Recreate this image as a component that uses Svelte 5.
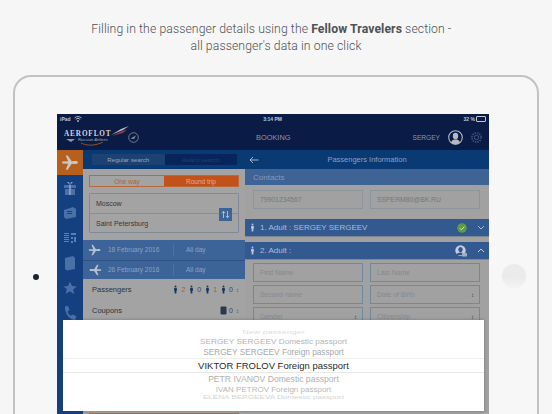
<script>
	const railIcons = ["plane", "gift", "ticket", "qr", "doc", "star", "phone"];
	const dates = [
		{ date: "18 February 2016", flip: false },
		{ date: "26 February 2016", flip: true }
	];
	const counts = [
		{ n: 2, hot: true },
		{ n: 0, hot: false },
		{ n: 1, hot: true },
		{ n: 0, hot: false }
	];
	const wheel = [
		{ text: "New passenger", cls: "r-3" },
		{ text: "SERGEY SERGEEV Domestic passport", cls: "r-2" },
		{ text: "SERGEY SERGEEV Foreign passport", cls: "r-1" },
		{ text: "VIKTOR FROLOV Foreign passport", cls: "r0" },
		{ text: "PETR IVANOV Domestic passport", cls: "r1" },
		{ text: "IVAN PETROV Foreign passport", cls: "r2" },
		{ text: "ELENA BERGEEVA Domestic passport", cls: "r3" }
	];
	const planePath = "M1 7.2 6 7l-2-5h1.6L9 7l3.6-.2c1 0 1.6.5 1.6 1.2s-.6 1.2-1.6 1.2L9 9l-3.4 5H4l2-5-5-.2z";
	const personPath = "M6 .5a1.6 1.6 0 1 1 0 3.2A1.6 1.6 0 0 1 6 .5zM4 4.4h4l.8 5H7.6l-.2 5H4.6l-.2-5H3.2z";
</script>

<div class="page">
	<p class="caption">
		Filling in the passenger details using the <b>Fellow Travelers</b> section -&nbsp;&nbsp;&nbsp;<br />
		all passenger's data in one click
	</p>

	<div class="tablet">
		<div class="camera"></div>
		<div class="home"></div>

		<div class="screen">
			<div class="status">
				<span class="carrier">iPad
					<svg width="8" height="6" viewBox="0 0 8 6"><path d="M.5 2a5 5 0 0 1 7 0M1.8 3.3a3.2 3.2 0 0 1 4.4 0" fill="none" stroke="#b8bfcc" stroke-width=".9" /><circle cx="4" cy="5" r=".9" fill="#b8bfcc" /></svg>
				</span>
				<span>3:14 PM</span>
				<span class="battery">32 % <i></i></span>
			</div>

			<div class="topbar">
				<div class="brand">
					<div class="logo">
						<span class="logo-name">AEROFLOT</span>
						<svg class="wing" width="18" height="11" viewBox="0 0 18 11">
							<path d="M0 9 10 3l8-3-6 4z" fill="#b9bfc9" />
							<path d="M1 10l10-5 5-1.500L12 7z" fill="#8f3b3f" />
						</svg>
						<svg class="swoosh" width="22" height="4" viewBox="0 0 22 4"><path d="M0 1c6 3 14 3 22-1" fill="none" stroke="#a2562b" stroke-width=".9" /></svg>
						<svg class="wing-left" width="9" height="3" viewBox="0 0 9 3"><path d="M0 0h9L5 3z" fill="#8d95a8" /></svg>
						<span class="logo-sub">Russian Airlines</span>
					</div>
					<svg width="11" height="11" viewBox="0 0 11 11"><circle cx="5.500" cy="5.500" r="4.800" fill="none" stroke="#8b93a5" stroke-width=".8" /><path d="M2.500 6.500 8 3.500 6 7z" fill="#8b93a5" /></svg>
				</div>
				<div class="top-main">
					<span class="booking">BOOKING</span>
					<span class="user">SERGEY</span>
					<svg class="avatar" width="15" height="15" viewBox="0 0 15 15">
						<circle cx="7.500" cy="7.500" r="6.800" fill="#0a1a44" stroke="#b4b9c4" stroke-width="1.100" />
						<ellipse cx="7.500" cy="6" rx="2.700" ry="3.200" fill="#b4b9c4" />
						<path d="M3 12.500c.8-2.500 2.400-3 4.500-3s3.700.5 4.500 3a6 6 0 0 1-9 0z" fill="#b4b9c4" />
					</svg>
					<svg class="gear" width="13" height="13" viewBox="0 0 13 13">
						<circle cx="6.500" cy="6.500" r="2.200" fill="none" stroke="#47567a" />
						<circle cx="6.500" cy="6.500" r="4.600" fill="none" stroke="#47567a" stroke-width="1.600" stroke-dasharray="1.400 1" />
					</svg>
				</div>
			</div>

			<div class="content">
				<nav class="rail">
					{#each railIcons as icon, i}
						<div class="rail-item" class:active={i === 0}>
							<svg width={i === 0 ? 19 : 16} height={i === 0 ? 19 : 16} viewBox="0 0 16 16">
								{#if icon === "plane"}
									<path d={planePath} fill="#c8c8c8" />
								{:else if icon === "gift"}
									<path d="M2 5h12v3H2zM3 9h10v6H3z" fill="#4a70a8" /><path d="M7.200 5h1.600v10H7.200zM8 5 5 2h2zM8 5l3-3H9z" fill="#8da6c8" />
								{:else if icon === "ticket"}
									<path d="M2 5l9-3 3 2v8l-10 2-2-2z" fill="#4a70a8" /><path d="M5 6h5v1H5zM5 8h5v1H5z" fill="#18407f" />
								{:else if icon === "qr"}
									<path d="M2 3h5v1H2zM2 5h5v1H2zM2 7h5v1H2zM2 9h5v1H2zM2 11h5v1H2zM9 3h5v2H9zM9 7h2v2H9zM12 7h2v5h-2zM9 11h2v2H9z" fill="#5b7fb4" />
								{:else if icon === "doc"}
									<path d="M3 3l8-2 2 2v11l-8 1.500-2-1.500z" fill="#4a70a8" />
								{:else if icon === "star"}
									<path d="M8 1.500l2 4.500 4.800.4-3.700 3.100 1.200 4.700L8 11.200l-4.300 2.500 1.200-4.700L1.200 6.400 6 6z" fill="#4a70a8" />
								{:else}
									<path d="M3 1.500 6 1l1.500 4-2 1.500c.6 1.800 1.700 3.200 3.300 4.300L11 9.500l3.500 2L13 15C7.500 15 2.500 8 3 1.500z" fill="#4a70a8" />
								{/if}
							</svg>
						</div>
					{/each}
				</nav>

				<section class="search">
					<div class="tabs">
						<span class="tab on">Regular search</span>
						<span class="tab">Award search</span>
					</div>
					<div class="form">
						<div class="trip">
							<span>One way</span>
							<span class="sel">Round trip</span>
						</div>
						<div class="cities">
							<div class="city">Moscow</div>
							<div class="city">Saint Petersburg</div>
							<div class="swap">
								<svg width="9" height="9" viewBox="0 0 9 9"><path d="M2.500 8V1.500M.8 3.200l1.700-2 1.700 2M6.500 1v6.500M4.800 5.800l1.700 2 1.700-2" fill="none" stroke="#b5c4da" stroke-width=".9" /></svg>
							</div>
						</div>
					</div>
					<div class="dates">
						{#each dates as d}
							<div class="date-row">
								<svg class:flip={d.flip} width="14" height="14" viewBox="0 0 16 16"><path d={planePath} fill="#b6c2d6" /></svg>
								<span class="date">{d.date}</span>
								<span class="day">All day</span>
							</div>
						{/each}
					</div>
					<div class="line">
						<span>Passengers</span>
						<div class="counts">
							{#each counts as c}
								<svg width="7" height="11" viewBox="0 0 12 15"><path d={personPath} fill="#17365f" /></svg>
								<span class:hot={c.hot}>{c.n}</span>
							{/each}
							<span class="updown">↕</span>
						</div>
					</div>
					<div class="line">
						<span>Coupons</span>
						<div class="counts">
							<svg width="7" height="9" viewBox="0 0 7 9"><rect x=".5" y=".5" width="6" height="8" rx="1" fill="#2b3950" /></svg>
							<span>0</span>
							<span class="updown">↕</span>
						</div>
					</div>
					<div class="bottom-cta"></div>
				</section>

				<section class="details">
					<div class="subhead">
						<svg width="10" height="8" viewBox="0 0 10 8"><path d="M9.500 4H1M4 1 1 4l3 3" fill="none" stroke="#b5c1d3" stroke-width=".9" /></svg>
						<span>Passengers Information</span>
					</div>
					<div class="contacts">Contacts</div>
					<div class="fields pad-contact">
						<div class="field">79901234567</div>
						<div class="field">SSPERM80@BK.RU</div>
					</div>
					<div class="adult">
						<svg width="7" height="11" viewBox="0 0 12 15"><path d={personPath} fill="#b8c5d8" /></svg>
						<span>1. Adult : SERGEY SERGEEV</span>
						<svg class="adult-state" width="10" height="10" viewBox="0 0 10 10"><circle cx="5" cy="5" r="4.800" fill="#5f9a45" /><path d="M2.800 5.200 4.400 6.800 7.400 3.500" fill="none" stroke="#d5e4cc" stroke-width="1" /></svg>
						<svg class="chev" width="8" height="5" viewBox="0 0 8 5"><path d="M1 1l3 3 3-3" fill="none" stroke="#a9b9d0" /></svg>
					</div>
					<div class="adult second">
						<svg width="7" height="11" viewBox="0 0 12 15"><path d={personPath} fill="#b8c5d8" /></svg>
						<span>2. Adult :</span>
						<svg class="adult-state" width="12" height="12" viewBox="0 0 12 12"><circle cx="5.500" cy="5.500" r="5.200" fill="#c3cddd" /><ellipse cx="5.500" cy="4.600" rx="2.200" ry="2.600" fill="#31568a" /><path d="M1.500 10c.6-2 2-2.600 4-2.600s3.400.6 4 2.600z" fill="#31568a" /><rect x="7" y="8" width="5" height="3.500" rx=".5" fill="#9fb0c8" /></svg>
						<svg class="chev" width="8" height="5" viewBox="0 0 8 5"><path d="M1 4l3-3 3 3" fill="none" stroke="#c3cddd" /></svg>
					</div>
					<div class="fields grid3">
						<div class="field blue">First Name</div>
						<div class="field blue">Last Name</div>
						<div class="field blue">Second name</div>
						<div class="field blue">Date of Birth<em>↕</em></div>
						<div class="field blue">Gender<em>↕</em></div>
						<div class="field blue">Citizenship<em>↕</em></div>
					</div>
				</section>
			</div>

			<div class="picker">
				<div class="wheel">
					{#each wheel as row}
						<div class="row {row.cls}"><span>{row.text}</span></div>
					{/each}
				</div>
			</div>
		</div>
	</div>
</div>

<style>
	:global(body) {
		margin: 0;
		background: #f6f6f6;
	}
	.page {
		width: 552px;
		height: 414px;
		overflow: hidden;
		background: #f6f6f6;
		font-family: "Liberation Sans", sans-serif;
	}
	.caption {
		margin: 0;
		height: 75px;
		box-sizing: border-box;
		padding-top: 20px;
		text-align: center;
		font-family: Roboto, sans-serif;
		font-weight: 300;
		font-size: 13.5px;
		line-height: 17px;
		letter-spacing: 0.1px;
		color: #4e5155;
		transform: scaleX(0.905);
	}
	.caption b {
		font-weight: 700;
	}
	.tablet {
		position: relative;
		box-sizing: border-box;
		width: 526px;
		height: 400px;
		margin-left: 13px;
		padding: 37px 48px 0 42px;
		border: 2px solid #c2c2c2;
		border-radius: 18px;
		background: #f7f7f7;
	}
	.camera {
		position: absolute;
		left: 18px;
		top: 197px;
		width: 6px;
		height: 6px;
		border-radius: 50%;
		background: #1d2433;
	}
	.home {
		position: absolute;
		left: 487px;
		top: 187px;
		width: 24px;
		height: 24px;
		border-radius: 50%;
		background: linear-gradient(#ebebeb 55%, #f3f3f3);
		box-shadow: 0 0 0 1px #f5f5f5;
	}
	.screen {
		position: relative;
		height: 300px;
		background: #0a1b45;
		color: #b8bfcc;
	}
	.status {
		display: flex;
		justify-content: space-between;
		align-items: center;
		height: 10px;
		padding: 0 3px;
		font-size: 5px;
		font-weight: 700;
		color: #c2c7d2;
	}
	.carrier {
		display: flex;
		align-items: center;
		gap: 3px;
	}
	.battery {
		display: flex;
		align-items: center;
		gap: 1px;
	}
	.battery i {
		width: 8px;
		height: 4px;
		border: 1px solid #c2c7d2;
		border-radius: 1px;
	}
	.topbar {
		display: flex;
		height: 26px;
	}
	.brand {
		display: flex;
		align-items: center;
		gap: 2px;
		width: 188px;
		padding-left: 7px;
		box-sizing: border-box;
	}
	.logo {
		position: relative;
		width: 62px;
		height: 20px;
	}
	.logo-name {
		position: absolute;
		left: 0;
		top: 3px;
		font-family: "Liberation Serif", serif;
		font-weight: 700;
		font-size: 7.200px;
		letter-spacing: 0.9px;
		color: #d3d6dd;
	}
	.wing {
		position: absolute;
		left: 47px;
		top: -1px;
	}
	.swoosh {
		position: absolute;
		left: 17px;
		top: 15px;
	}
	.wing-left {
		position: absolute;
		left: 2px;
		top: 12px;
	}
	.logo-sub {
		position: absolute;
		left: 14px;
		top: 10px;
		font-size: 4.200px;
		font-style: italic;
		color: #a3aabb;
	}
	.top-main {
		flex: 1;
		display: flex;
		align-items: center;
		color: #8e97aa;
	}
	.booking {
		margin-left: 11px;
		font-size: 7.400px;
	}
	.user {
		margin-left: auto;
		font-size: 6.600px;
	}
	.avatar {
		margin-left: 8px;
	}
	.gear {
		margin: 0 6px 0 7px;
	}
	.content {
		position: relative;
		display: flex;
		height: 264px;
	}
	.rail {
		width: 26px;
		flex: none;
		background: #15407f;
	}
	.rail-item {
		display: flex;
		align-items: center;
		justify-content: center;
		height: 25px;
	}
	.rail-item.active {
		background: #b5601f;
	}
	.search {
		width: 162px;
		flex: none;
		background: #a3a3a3;
		color: #30343b;
		font-size: 7px;
	}
	.tabs {
		display: flex;
		height: 19px;
		box-sizing: border-box;
		padding: 4px 8px 4px 9px;
		background: #0a3a73;
	}
	.tab {
		flex: 1;
		display: flex;
		align-items: center;
		justify-content: center;
		background: #07255a;
		color: #21406f;
		font-size: 6.200px;
	}
	.tab.on {
		background: #1d4272;
		color: #94a6bf;
	}
	.form {
		padding: 6px 6px 7px;
	}
	.trip {
		display: flex;
		height: 12px;
		box-sizing: border-box;
		border: 1px solid #b86a3c;
		color: #b8622e;
		font-size: 6.500px;
	}
	.trip span {
		flex: 1;
		display: flex;
		align-items: center;
		justify-content: center;
	}
	.trip .sel {
		background: #c2521a;
		color: #eba987;
	}
	.cities {
		position: relative;
		margin-top: 6px;
		box-sizing: border-box;
		height: 40px;
		border: 1px solid #7f8b9c;
		border-radius: 1px;
	}
	.city {
		display: flex;
		align-items: center;
		height: 19px;
		padding-left: 6px;
		color: #33373d;
		font-size: 7px;
	}
	.city + .city {
		border-top: 1px solid #8d8d8d;
	}
	.swap {
		position: absolute;
		right: 6px;
		top: 14px;
		display: flex;
		align-items: center;
		justify-content: center;
		width: 13px;
		height: 13px;
		background: #3c6499;
	}
	.dates {
		background: #3d6499;
	}
	.date-row {
		display: flex;
		align-items: center;
		box-sizing: border-box;
		height: 19.500px;
		padding-left: 5px;
		color: #8ea2bf;
		font-size: 6.500px;
	}
	.date-row + .date-row {
		border-top: 1px solid #2f5285;
	}
	.date-row svg {
		width: 14px;
		flex: none;
	}
	.flip {
		transform: scaleX(-1);
	}
	.date {
		width: 65px;
		margin-left: 6px;
		border-right: 1px solid #50729f;
		line-height: 12px;
	}
	.day {
		margin-left: 12px;
	}
	.line {
		display: flex;
		align-items: center;
		justify-content: space-between;
		height: 21px;
		padding: 0 6px 0 9px;
		color: #2f343b;
		font-size: 7.500px;
	}
	.counts {
		display: flex;
		align-items: center;
		gap: 2px;
		font-size: 7px;
		color: #3a4658;
	}
	.counts span {
		margin-right: 1px;
	}
	.counts .hot {
		color: #b8562a;
	}
	.counts .updown {
		font-size: 6px;
		margin-right: 0;
	}
	.bottom-cta {
		height: 12px;
		margin: 92px 6px 0;
		background: #bb6a33;
	}
	.details {
		flex: 1;
		background: #a1a1a1;
		font-size: 7px;
	}
	.subhead {
		display: flex;
		align-items: center;
		justify-content: center;
		position: relative;
		height: 19px;
		background: #0a3a73;
		color: #8ba0bd;
		font-size: 7.500px;
	}
	.subhead svg {
		position: absolute;
		left: 4px;
		top: 6px;
	}
	.contacts {
		display: flex;
		align-items: center;
		height: 16px;
		padding-left: 8px;
		background: #3e6496;
		color: #8299b8;
		font-size: 8px;
	}
	.fields {
		display: grid;
		grid-template-columns: 110px 110px;
		column-gap: 7px;
		padding: 0 8px;
	}
	.pad-contact {
		padding-top: 5px;
		padding-bottom: 10px;
	}
	.field {
		position: relative;
		display: flex;
		align-items: center;
		height: 19px;
		box-sizing: border-box;
		padding-left: 6px;
		border: 1px solid #8d949c;
		color: #75787d;
		font-size: 6.800px;
	}
	.field.blue {
		border-color: #71899f;
		color: #86898d;
	}
	.field em {
		position: absolute;
		right: 5px;
		font-style: normal;
		font-size: 6px;
		color: #30425c;
	}
	.adult {
		display: flex;
		align-items: center;
		gap: 4px;
		height: 17px;
		padding-left: 4px;
		background: #325a91;
		color: #aebdd3;
		font-size: 8px;
		box-shadow: 0 1px 0 #7f8890;
	}
	.adult.second {
		margin-top: 6px;
	}
	.adult-state {
		margin-left: auto;
	}
	.chev {
		margin: 0 4px 0 6px;
	}
	.grid3 {
		row-gap: 3px;
		padding-top: 4px;
	}
	.picker {
		position: absolute;
		left: 6px;
		top: 206px;
		width: 421px;
		height: 91px;
		background: #fff;
		box-shadow: 0 0 3px rgba(60, 60, 60, 0.45);
	}
	.wheel {
		padding-top: 8px;
	}
	.row {
		display: flex;
		align-items: center;
		justify-content: center;
		white-space: nowrap;
		font-family: "Liberation Sans", sans-serif;
	}
	.r-3 {
		height: 7px;
		font-size: 9px;
		color: #dcdcdc;
	}
	.r-3 span {
		transform: scaleY(0.55);
	}
	.r-2 {
		height: 12px;
		font-size: 8.250px;
		color: #b4b4b4;
	}
	.r-2 span {
		transform: scaleY(0.85);
	}
	.r-1 {
		height: 11px;
		font-size: 8.250px;
		color: #a8a8a8;
	}
	.r0 {
		height: 15px;
		box-sizing: border-box;
		border-top: 1px solid #efefef;
		border-bottom: 1px solid #e8e8e8;
		font-size: 9.500px;
		color: #2a2a2a;
	}
	.r1 {
		height: 11px;
		font-size: 8.600px;
		color: #b0b0b0;
	}
	.r2 {
		height: 10px;
		font-size: 8px;
		color: #b8b8b8;
	}
	.r2 span {
		transform: scaleY(0.9);
	}
	.r3 {
		height: 6px;
		font-size: 8.100px;
		color: #d4d4d4;
	}
	.r3 span {
		transform: scaleY(0.55);
	}
</style>
